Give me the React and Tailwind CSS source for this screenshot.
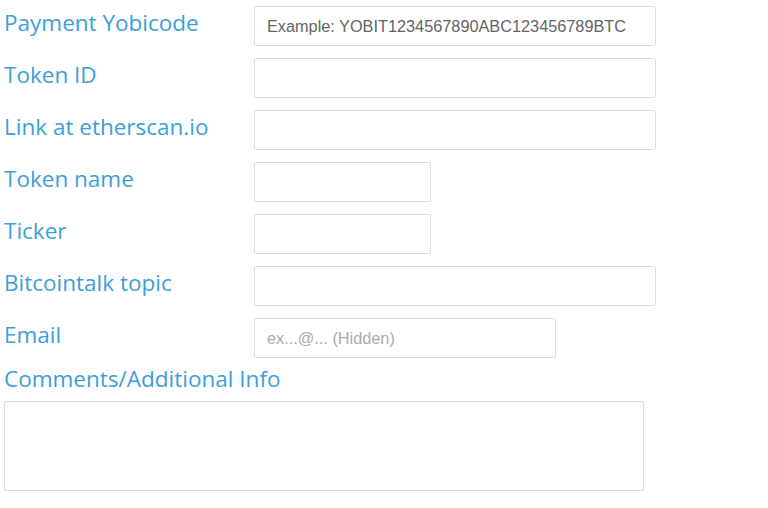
const FIELDS = [
  { label: 'Payment Yobicode', width: 'w-[402px]', placeholder: 'Example: YOBIT1234567890ABC123456789BTC', dark: true },
  { label: 'Token ID', width: 'w-[402px]' },
  { label: 'Link at etherscan.io', width: 'w-[402px]' },
  { label: 'Token name', width: 'w-[177px]' },
  { label: 'Ticker', width: 'w-[177px]' },
  { label: 'Bitcointalk topic', width: 'w-[402px]' },
  { label: 'Email', width: 'w-[302px]', placeholder: 'ex...@... (Hidden)' },
];

export default function App() {
  return (
    <div className="min-h-[508px] bg-white pl-[4px] pt-[6px] font-['Open_Sans',sans-serif]">
      {FIELDS.map((f) => (
        <div key={f.label} className="flex items-start mb-[12px]">
          <label className="w-[250px] shrink-0 text-[22.5px] leading-[34px] text-[#3c9fd8]">
            {f.label}
          </label>
          <input
            type="text"
            placeholder={f.placeholder}
            className={`${f.width} h-[40px] border border-[#dcdcdc] rounded-[2px] px-[12px] text-[16.3px] font-['Liberation_Sans',Arial,sans-serif] outline-none ${
              f.dark ? 'placeholder:text-[#646464]' : 'placeholder:text-[#a8acb2]'
            }`}
          />
        </div>
      ))}
      <div className="-mt-[8px] text-[22.5px] leading-[34px] text-[#3c9fd8]">Comments/Additional Info</div>
      <textarea className="mt-[5px] block w-[640px] h-[90px] border border-[#dcdcdc] rounded-[2px] resize-none outline-none" />
    </div>
  );
}
